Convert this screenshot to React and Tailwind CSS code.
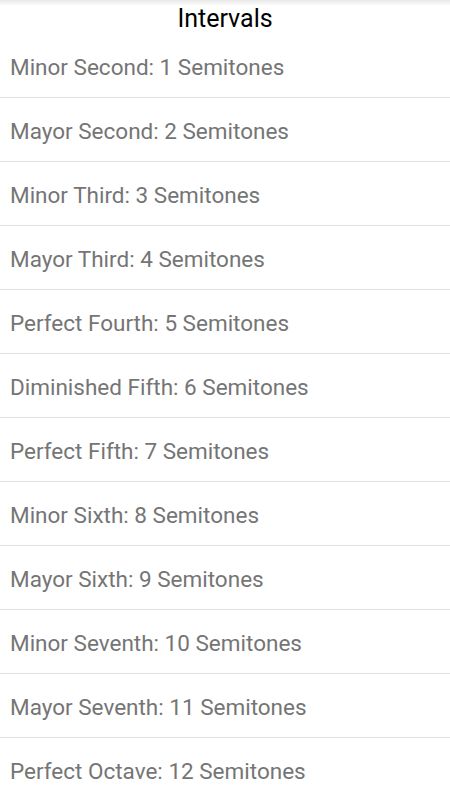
export default function App() {
  const items = [
    "Minor Second: 1 Semitones",
    "Mayor Second: 2 Semitones",
    "Minor Third: 3 Semitones",
    "Mayor Third: 4 Semitones",
    "Perfect Fourth: 5 Semitones",
    "Diminished Fifth: 6 Semitones",
    "Perfect Fifth: 7 Semitones",
    "Minor Sixth: 8 Semitones",
    "Mayor Sixth: 9 Semitones",
    "Minor Seventh: 10 Semitones",
    "Mayor Seventh: 11 Semitones",
    "Perfect Octave: 12 Semitones",
  ];
  return (
    <div className="w-[450px] h-[800px] overflow-hidden bg-white relative" style={{ fontFamily: "Roboto, 'Liberation Sans', sans-serif" }}>
      <div className="absolute top-0 left-0 right-0 h-[6px] bg-gradient-to-b from-[#e8e8e8] to-white"></div>
      <div className="h-[34px] flex items-center justify-center pt-[3px] text-[25px] text-black relative">Intervals</div>
      {items.map((t) => (
        <div key={t} className="h-[64px] border-b border-[#e0e0e0] flex items-center pl-[10px] pt-[4px] text-[22.5px] text-[#757575]">
          {t}
        </div>
      ))}
    </div>
  );
}
